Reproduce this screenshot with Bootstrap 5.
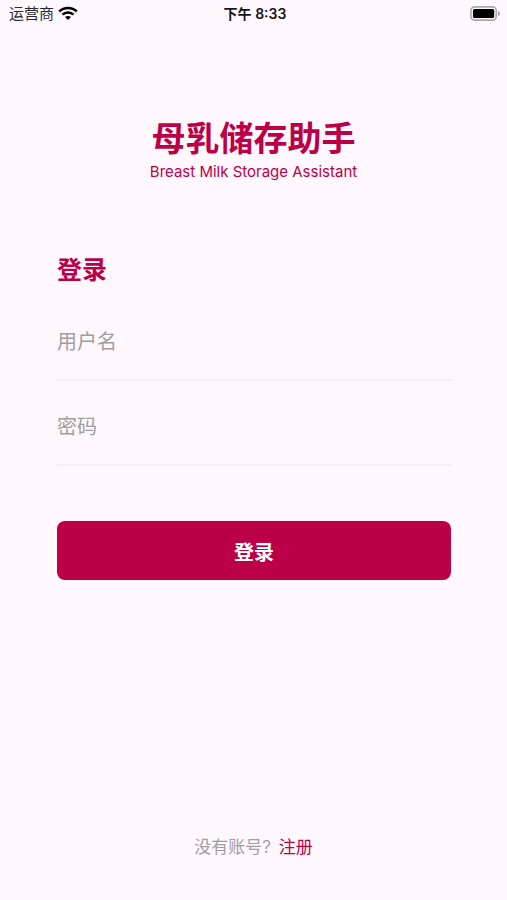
<!DOCTYPE html>
<html lang="zh-CN">
<head>
<meta charset="utf-8">
<meta name="viewport" content="width=device-width, initial-scale=1">
<title>母乳储存助手</title>
<link href="https://cdn.jsdelivr.net/npm/bootstrap@5.3.0/dist/css/bootstrap.min.css" rel="stylesheet">
<style>
  :root { --brand: #bc0048; --hint: #a09ea1; }
  body { background: #fef8fd; font-family: Inter, "Noto Sans CJK SC", sans-serif; }
  .status-bar { height: 27px; padding: 0 6px 0 9px; font-size: 15px; line-height: 27px; color: #2a282c; }
  .status-time { font-size: 14px; font-weight: 600; color: #17151a; }
  .status-bar svg { display: block; }
  .brand-text { color: var(--brand); }
  .brand-head { padding-top: 88px; }
  .brand-title { font-size: 34px; line-height: 48px; font-weight: 700; }
  .brand-sub { font-size: 15px; line-height: 18px; }
  .login-form { padding: 71px 54px 0 57px; }
  .form-title { font-size: 25px; line-height: 36px; font-weight: 700; margin-bottom: 16px; }
  .field { height: 77px; margin-bottom: 8px; padding: 0; font-size: 20px; background: transparent; border: 0; border-bottom: 2px solid #f3eff3; border-radius: 0; }
  .field:focus { background: transparent; box-shadow: none; border-color: var(--brand); }
  .field::placeholder { color: var(--hint); opacity: 1; }
  .submit-row { padding: 47px 2px 0 0; }
  .btn-brand { height: 59px; padding: 4px 0 0; font-size: 20px; font-weight: 700; border: 0; border-radius: 8px; background: var(--brand); color: #fff; }
  .btn-brand:hover, .btn-brand:focus { background: #a2003e; color: #fff; }
  .signup { padding-bottom: 40px; font-size: 17px; line-height: 26px; color: var(--hint); }
</style>
</head>
<body>
<div class="d-flex flex-column min-vh-100">
  <header class="status-bar row g-0 align-items-center">
    <div class="col d-flex align-items-center gap-1">
      <span>运营商</span>
      <svg width="20" height="15" viewBox="0 0 20 15" fill="none" stroke="#000" stroke-width="2.5" aria-hidden="true">
        <path d="M1.2 5.4C6 .8 14 .8 18.8 5.4"/>
        <path d="M4.4 8.7c3.1-2.9 8.1-2.9 11.2 0"/>
        <path d="M10 14 7 11c1.6-1.5 4.4-1.5 6 0z" fill="#000" stroke="none"/>
      </svg>
    </div>
    <div class="col-auto status-time">下午 8:33</div>
    <div class="col d-flex justify-content-end">
      <svg width="31" height="15" viewBox="0 0 31 15" aria-hidden="true">
        <rect x=".9" y=".9" width="25.4" height="13.2" rx="3.8" fill="#fef8fd" stroke="#aaa7aa" stroke-width="1.6"/>
        <rect x="3" y="3" width="21.2" height="9" rx="1.6" fill="#000"/>
        <path d="M28 5c2.7.8 2.7 4.2 0 5z" fill="#aaa7aa"/>
      </svg>
    </div>
  </header>
  <main class="flex-grow-1">
    <div class="brand-head brand-text text-center">
      <h1 class="brand-title mb-0">母乳储存助手</h1>
      <p class="brand-sub mb-0">Breast Milk Storage Assistant</p>
    </div>
    <form class="login-form">
      <h2 class="form-title brand-text">登录</h2>
      <input class="form-control field" id="username" type="text" aria-label="用户名" placeholder="用户名" autocomplete="username">
      <input class="form-control field" id="password" type="password" aria-label="密码" placeholder="密码" autocomplete="current-password">
      <div class="submit-row">
        <button class="btn btn-brand w-100" type="submit">登录</button>
      </div>
    </form>
  </main>
  <footer class="signup d-flex justify-content-center gap-2">
    <span>没有账号?</span>
    <a class="brand-text text-decoration-none" href="#register">注册</a>
  </footer>
</div>
<script src="https://cdn.jsdelivr.net/npm/bootstrap@5.3.0/dist/js/bootstrap.bundle.min.js"></script>
</body>
</html>
